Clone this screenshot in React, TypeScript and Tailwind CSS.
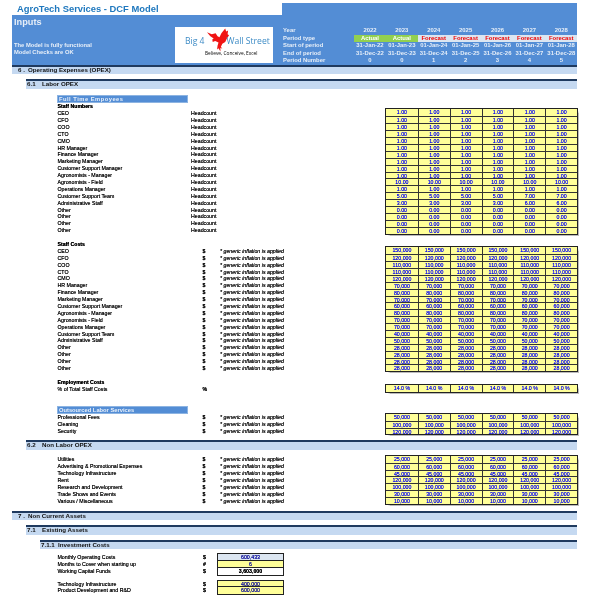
import React from 'react';

type Row = { label: string; values: string[] };

const repeat = (v: string) => [v, v, v, v, v, v];

const years = ['2022', '2023', '2024', '2025', '2026', '2027', '2028'];
const starts = ['31-Jan-22', '01-Jan-23', '01-Jan-24', '01-Jan-25', '01-Jan-26', '01-Jan-27', '01-Jan-28'];
const ends = ['31-Dec-22', '31-Dec-23', '31-Dec-24', '31-Dec-25', '31-Dec-26', '31-Dec-27', '31-Dec-28'];
const periods = ['0', '0', '1', '2', '3', '4', '5'];

const staffNames = [
  'CEO', 'CFO', 'COO', 'CTO', 'CMO', 'HR Manager', 'Finance Manager', 'Marketing Manager',
  'Customer Support Manager', 'Agronomists - Manager', 'Agronomists - Field', 'Operations Manager',
  'Customer Support Team', 'Administrative Staff', 'Other', 'Other', 'Other', 'Other',
];

const numbers = [
  '1.00', '1.00', '1.00', '1.00', '1.00', '1.00', '1.00', '1.00', '1.00', '1.00', '10.00', '1.00',
  '5.00', '3.00', '0.00', '0.00', '0.00', '0.00',
];

const costs = [
  '150,000', '120,000', '110,000', '110,000', '120,000', '70,000', '80,000', '70,000', '60,000',
  '80,000', '70,000', '70,000', '40,000', '50,000', '28,000', '28,000', '28,000', '28,000',
];

const staffRows: Row[] = staffNames.map((label, i) => {
  const values = repeat(numbers[i]);
  if (label === 'Customer Support Team') values.splice(4, 2, '7.00', '7.00');
  if (label === 'Administrative Staff') values.splice(4, 2, '6.00', '6.00');
  return { label, values };
});
const costRows: Row[] = staffNames.map((label, i) => ({ label, values: repeat(costs[i]) }));
const outsourced: Row[] = [
  { label: 'Professional Fees', values: repeat('50,000') },
  { label: 'Cleaning', values: repeat('100,000') },
  { label: 'Security', values: repeat('120,000') },
];
const nonLabor: Row[] = [
  { label: 'Utilities', values: repeat('25,000') },
  { label: 'Advertising & Promotional Expenses', values: repeat('60,000') },
  { label: 'Technology Infrastructure', values: repeat('45,000') },
  { label: 'Rent', values: repeat('120,000') },
  { label: 'Research and Development', values: repeat('100,000') },
  { label: 'Trade Shows and Events', values: repeat('30,000') },
  { label: 'Various / Miscellaneous', values: repeat('10,000') },
];

function Spacer() {
  return <div className="h-[6.9px]" />;
}

function Heading({ children }: { children: React.ReactNode }) {
  return <div className="h-[6.9px] pl-[57.5px] pt-[0.6px] text-[5.2px] font-bold leading-[6.9px] text-black [text-shadow:0_0_0.4px_#000]">{children}</div>;
}

function Band({ num, title, className, numClass }: { num: string; title: string; className: string; numClass: string }) {
  return (
    <div className={`flex h-[9.3px] border-t-2 border-[#1F3A5F] bg-[#C5D9F1] text-[6.2px] font-bold leading-[5.8px] text-[#111] ${className}`}>
      <span className={numClass}>{num}</span>
      <span>{title}</span>
    </div>
  );
}

function SubHead({ children, className }: { children: React.ReactNode; className?: string }) {
  return (
    <div className={`ml-[57px] h-[8px] w-[131px] border border-[#8DB4E2] bg-[#538DD5] pl-[1px] text-[5.75px] font-bold leading-[6px] text-[#E8F0FA] ${className ?? ''}`}>
      {children}
    </div>
  );
}

function Block({ rows, unit }: { rows: Row[]; unit?: string }) {
  return (
    <div className="flex w-[577px]">
      <div className="w-[386px] shrink-0 pl-[57.5px]">
        {rows.map((r, i) => (
          <div key={i} className="flex h-[6.9px] pt-[0.6px] leading-[6.9px] text-[#111] [text-shadow:0_0_0.3px_#000]">
            <span className="w-[133.5px] shrink-0 whitespace-nowrap">{r.label}</span>
            {unit === 'Headcount' ? (
              <span>Headcount</span>
            ) : (
              <>
                <span className="w-[29px] shrink-0 pl-[11.5px] font-bold">{unit}</span>
                {unit === '$' && <span className="whitespace-nowrap italic">* generic inflation is applied</span>}
              </>
            )}
          </div>
        ))}
      </div>
      <div className="flex-1 bg-[#FFFF99] outline outline-1 outline-[#222] shadow-[1.5px_1.5px_1px_#bbb]">
        {rows.map((r, i) => (
          <div key={i} className={`grid h-[6.9px] grid-cols-6 ${i > 0 ? 'border-t border-[#333]' : ''}`}>
            {r.values.map((v, j) => (
              <div key={j} className={`text-center leading-[6px] text-[#1010F0] [text-shadow:0_0_0.2px_#1010F0] ${j > 0 ? 'border-l border-[#333]' : ''}`}>
                {v}
              </div>
            ))}
          </div>
        ))}
      </div>
    </div>
  );
}

function SingleRow({ label, unit, children }: { label: string; unit: string; children?: React.ReactNode }) {
  return (
    <div className="flex h-[6.9px] pl-[57.5px] leading-[6.9px] text-[#111] [text-shadow:0_0_0.3px_#000]">
      <span className="w-[145.5px] whitespace-nowrap">{label}</span>
      <span className="w-[15px] font-bold">{unit}</span>
      {children}
    </div>
  );
}

function Eagle() {
  return (
    <svg viewBox="0 0 24 25" className="-mr-[3px] ml-[2px] h-[25px] w-[23px] shrink-0">
      <path
        fill="#F01414"
        d="M0 4 L5 6 L9 5 L11 8 L13 9 L15 5 L19 0 L20 3 L22 2 L21.5 6 L23 7 L20.5 11 L19 14 L16 16 L14.5 19 L16 21 L14 20 L14 24 L12 20.5 L10.5 22 L11 18 L12 14.5 L8.5 13 L6 14 L5.5 11.5 L7 10.5 L3.5 8 Z"
      />
    </svg>
  );
}

function Logo() {
  return (
    <div className="mb-[1.5px] h-[36px] w-[98px] shrink-0 self-end bg-white pt-[1px] font-normal" style={{ fontFamily: '"Open Sans", sans-serif' }}>
      <div className="flex h-[25px] items-center pl-[10px] text-[8.6px] leading-none text-[#3E8CC6]">
        <span className="mt-[2px]">Big 4</span>
        <Eagle />
        <span className="mt-[2px] whitespace-nowrap">Wall Street</span>
      </div>
      <div className="-mt-[3px] pl-[30px] text-[4.8px] leading-[6px] text-black">Believe, Conceive, Excel</div>
    </div>
  );
}

function HeaderRow({ label, cells, kind }: { label: string; cells: string[]; kind?: 'type' }) {
  return (
    <div className="flex h-[7.5px] text-[5.9px] leading-[7.5px]">
      <span className="w-[71px] shrink-0 whitespace-nowrap">{label}</span>
      {cells.map((c, i) => (
        <div
          key={i}
          className={`w-[31.9px] shrink-0 whitespace-nowrap text-center ${kind === 'type' ? (i < 2 ? 'bg-[#92D050] text-white' : 'bg-[#DCE6F1] text-[#F00000]') : ''}`}
        >
          {c}
        </div>
      ))}
    </div>
  );
}

function Header() {
  return (
    <div className="ml-[12px] mt-[3px] h-[61.5px] w-[565px] bg-[#538DD5] font-bold text-[#E6EEF8]">
      <div className="h-[12px] w-[270px] bg-white pl-[5px] text-[9.4px] leading-[12px] text-[#1F78BE]">
        AgroTech Services - DCF Model
      </div>
      <div className="flex h-[49.5px]">
        <div className="w-[163px] shrink-0 pl-[2px]">
          <div className="h-[14px] text-[9.2px] leading-[14px]">Inputs</div>
          <div className="mt-[12.5px] h-[7.8px] text-[5.8px] leading-[7.8px]">The Model is fully functional</div>
          <div className="h-[7.8px] text-[5.8px] leading-[7.8px]">Model Checks are OK</div>
        </div>
        <Logo />
        <div className="ml-[10px] self-end">
          <HeaderRow label="Year" cells={years} />
          <HeaderRow label="Period type" cells={['Actual', 'Actual', 'Forecast', 'Forecast', 'Forecast', 'Forecast', 'Forecast']} kind="type" />
          <HeaderRow label="Start of period" cells={starts} />
          <HeaderRow label="End of period" cells={ends} />
          <HeaderRow label="Period Number" cells={periods} />
        </div>
      </div>
    </div>
  );
}

function Cell({ className, children }: { className: string; children: React.ReactNode }) {
  return <div className={`h-[6.9px] w-[65px] text-center leading-[6px] outline outline-1 outline-[#222] ${className}`}>{children}</div>;
}

export default function App() {
  return (
    <div className="h-[600px] w-[594px] overflow-hidden bg-white text-[5.25px] blur-[0.25px]" style={{ fontFamily: '"Liberation Sans", Arial, sans-serif' }}>
      <Header />
      <Band num="6 ." title="Operating Expenses (OPEX)" className="ml-[12px] w-[565px]" numClass="ml-[6px] w-[10px]" />
      <div className="h-[5.5px]" />
      <Band num="6.1" title="Labor OPEX" className="ml-[26px] w-[551px]" numClass="ml-[1px] w-[15px]" />
      <div className="h-[6px]" />
      <SubHead className="tracking-[0.5px]">Full Time Empoyees</SubHead>
      <Heading>Staff Numbers</Heading>
      <Block rows={staffRows} unit="Headcount" />
      <Spacer />
      <Heading>Staff Costs</Heading>
      <Block rows={costRows} unit="$" />
      <Spacer />
      <Heading>Employment Costs</Heading>
      <Block rows={[{ label: '% of Total Staff Costs', values: repeat('14.0 %') }]} unit="%" />
      <div className="h-[13.8px]" />
      <SubHead>Outsourced Labor Services</SubHead>
      <Block rows={outsourced} unit="$" />
      <div className="h-[6px]" />
      <Band num="6.2" title="Non Labor OPEX" className="ml-[26px] w-[551px]" numClass="ml-[1px] w-[15px]" />
      <div className="h-[6px]" />
      <Block rows={nonLabor} unit="$" />
      <div className="h-[6.5px]" />
      <Band num="7 ." title="Non Current Assets" className="ml-[12px] w-[565px]" numClass="ml-[6px] w-[10px]" />
      <div className="h-[5.5px]" />
      <Band num="7.1" title="Existing Assets" className="ml-[26px] w-[551px]" numClass="ml-[1px] w-[15px]" />
      <div className="h-[5px]" />
      <Band num="7.1.1" title="Investment Costs" className="ml-[40px] w-[537px]" numClass="ml-[1px] w-[17px]" />
      <div className="h-[5px]" />
      <SingleRow label="Monthly Operating Costs" unit="$">
        <Cell className="bg-[#DCE6F1] text-[#1010F0]">600,433</Cell>
      </SingleRow>
      <SingleRow label="Months to Cover when starting up" unit="#">
        <Cell className="bg-[#FFFF99] text-[#1010F0]">6</Cell>
      </SingleRow>
      <SingleRow label="Working Capital Funds" unit="$">
        <Cell className="bg-white font-bold text-black">3,603,000</Cell>
      </SingleRow>
      <div className="h-[6px]" />
      <SingleRow label="Technology Infrastructure" unit="$">
        <Cell className="bg-[#FFFF99] text-[#1010F0]">400,000</Cell>
      </SingleRow>
      <SingleRow label="Product Development and R&D" unit="$">
        <Cell className="bg-[#FFFF99] text-[#1010F0]">600,000</Cell>
      </SingleRow>
    </div>
  );
}
